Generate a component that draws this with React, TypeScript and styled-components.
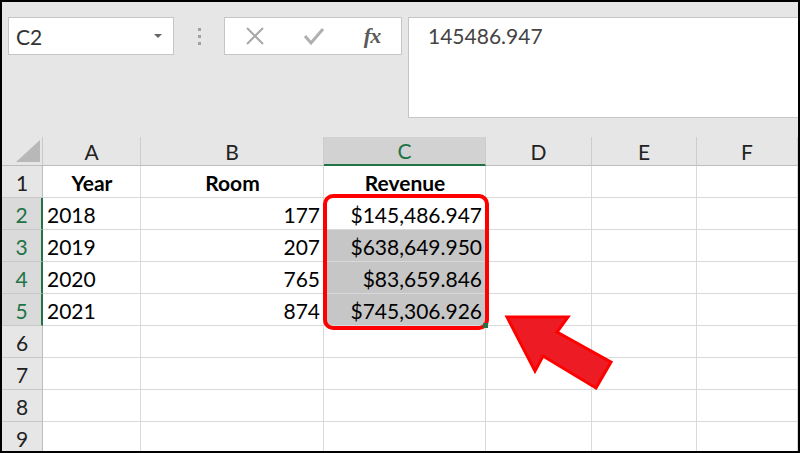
import styled, { createGlobalStyle } from "styled-components";

const GlobalStyle = createGlobalStyle`
  html, body {
    margin: 0;
    padding: 0;
    background: #fff;
  }
`;

const GREEN = "#217346";
const FONT = `"Lato", "Open Sans", "Noto Sans", sans-serif`;

const Frame = styled.div`
  position: relative;
  width: 800px;
  height: 453px;
  box-sizing: border-box;
  border: 2px solid #000;
  background: #e6e6e6;
  overflow: hidden;
  font-family: ${FONT};
  display: flex;
  flex-direction: column;
`;

/* ---------- formula bar ---------- */

const Toolbar = styled.div`
  height: 135px;
  flex-shrink: 0;
  display: flex;
  align-items: flex-start;
  padding: 15px 0 0 6px;
  box-sizing: border-box;
`;

const NameBox = styled.div`
  width: 166px;
  height: 38px;
  box-sizing: border-box;
  background: #fff;
  border: 1px solid #c6c6c6;
  display: flex;
  align-items: center;
  justify-content: space-between;
  padding: 0 11px 0 7px;
  font-size: 21px;
  color: #333;
`;

const DropArrow = styled.span`
  width: 0;
  height: 0;
  border-left: 4px solid transparent;
  border-right: 4px solid transparent;
  border-top: 4px solid #666;
`;

const Grip = styled.div`
  width: 50px;
  height: 38px;
  display: flex;
  flex-direction: column;
  align-items: center;
  justify-content: center;
  gap: 4px;
`;

const GripDot = styled.span`
  width: 3px;
  height: 3px;
  background: #a0a0a0;
`;

const ButtonBox = styled.div`
  width: 178px;
  height: 38px;
  box-sizing: border-box;
  background: #fff;
  border: 1px solid #c6c6c6;
  display: grid;
  grid-template-columns: 60px 58px 58px;
  align-items: center;
  justify-items: center;
`;

const Fx = styled.span`
  font-family: "Liberation Serif", serif;
  font-style: italic;
  font-weight: 700;
  font-size: 22px;
  color: #5a5a5a;
  letter-spacing: -1px;
`;

const FormulaBox = styled.div`
  flex: 1;
  margin-left: 6px;
  height: 101px;
  box-sizing: border-box;
  background: #fff;
  border: 1px solid #c6c6c6;
  border-right: none;
  padding: 5px 0 0 19px;
  font-size: 21px;
  color: #444;
`;

/* ---------- sheet ---------- */

const Sheet = styled.div`
  flex: 1;
  display: grid;
  grid-template-columns: 41px 98px 183px 162px 106px 105px 1fr;
  grid-template-rows: 29px;
  grid-auto-rows: 32px;
  background: #fff;
`;

const Corner = styled.div`
  background: #e6e6e6;
  border-right: 1px solid #c9c9c9;
  border-bottom: 1px solid #bdbdbd;
  display: flex;
  align-items: flex-end;
  justify-content: flex-end;
  padding: 0 2px 3px 0;
`;

const ColHead = styled.div<{ $active?: boolean }>`
  background: ${({ $active }) => ($active ? "#d2d2d2" : "#e6e6e6")};
  color: ${({ $active }) => ($active ? GREEN : "#222")};
  border-right: 1px solid #cdcdcd;
  border-bottom: ${({ $active }) =>
    $active ? `2px solid ${GREEN}` : "1px solid #bdbdbd"};
  display: flex;
  align-items: center;
  justify-content: center;
  font-size: 21px;
`;

const RowHead = styled.div<{ $active?: boolean }>`
  background: ${({ $active }) => ($active ? "#dadada" : "#e6e6e6")};
  color: ${({ $active }) => ($active ? GREEN : "#222")};
  border-right: ${({ $active }) =>
    $active ? `2px solid ${GREEN}` : "1px solid #bdbdbd"};
  border-bottom: 1px solid #c9c9c9;
  display: flex;
  align-items: center;
  justify-content: center;
  font-size: 21px;
  padding-top: 2px;
`;

const Cell = styled.div<{ $align?: "left" | "right" | "center"; $bold?: boolean; $sel?: boolean }>`
  background: ${({ $sel }) => ($sel ? "#c6c6c6" : "#fff")};
  border-right: 1px solid #d9d9d9;
  border-bottom: 1px solid #d9d9d9;
  display: flex;
  align-items: center;
  justify-content: ${({ $align }) =>
    $align === "right" ? "flex-end" : $align === "center" ? "center" : "flex-start"};
  padding: 2px 3px 0 4px;
  font-size: 21px;
  font-weight: ${({ $bold }) => ($bold ? 700 : 400)};
  color: #000;
  white-space: nowrap;
  overflow: hidden;
`;

const Highlight = styled.div`
  position: absolute;
  left: 321px;
  top: 192px;
  width: 166px;
  height: 136px;
  box-sizing: border-box;
  border: 4px solid #f00;
  border-radius: 10px;
`;

const FillHandle = styled.div`
  position: absolute;
  left: 481px;
  top: 321px;
  width: 5px;
  height: 5px;
  background: ${GREEN};
`;

const Arrow = styled.svg`
  position: absolute;
  left: 0;
  top: 0;
  pointer-events: none;
`;

const COLS = ["A", "B", "C", "D", "E", "F"];

type Row = { a?: string; b?: string; c?: string; head?: boolean };

const ROWS: Row[] = [
  { a: "Year", b: "Room", c: "Revenue", head: true },
  { a: "2018", b: "177", c: "$145,486.947" },
  { a: "2019", b: "207", c: "$638,649.950" },
  { a: "2020", b: "765", c: "$83,659.846" },
  { a: "2021", b: "874", c: "$745,306.926" },
  {},
  {},
  {},
  {},
];

export default function App() {
  return (
    <>
      <GlobalStyle />
      <Frame>
        <Toolbar>
          <NameBox>
            C2
            <DropArrow />
          </NameBox>
          <Grip>
            <GripDot />
            <GripDot />
            <GripDot />
          </Grip>
          <ButtonBox>
            <svg width="20" height="20" viewBox="0 0 20 20">
              <path d="M2 2 L18 18 M18 2 L2 18" stroke="#a8a8a8" strokeWidth="2" fill="none" />
            </svg>
            <svg width="22" height="20" viewBox="0 0 22 20">
              <path d="M2 10 L8 17 L20 3" stroke="#b0b0b0" strokeWidth="3" fill="none" />
            </svg>
            <Fx>fx</Fx>
          </ButtonBox>
          <FormulaBox>145486.947</FormulaBox>
        </Toolbar>

        <Sheet>
          <Corner>
            <svg width="24" height="22" viewBox="0 0 24 22">
              <polygon points="0,22 24,22 24,0" fill="#b8b8b8" />
            </svg>
          </Corner>
          {COLS.map((c) => (
            <ColHead key={c} $active={c === "C"}>
              {c}
            </ColHead>
          ))}
          {ROWS.map((r, i) => {
            const n = i + 1;
            const sel = n >= 2 && n <= 5;
            return [
              <RowHead key={`h${n}`} $active={sel}>
                {n}
              </RowHead>,
              <Cell key={`a${n}`} $align={r.head ? "center" : "left"} $bold={r.head}>
                {r.a}
              </Cell>,
              <Cell key={`b${n}`} $align={r.head ? "center" : "right"} $bold={r.head}>
                {r.b}
              </Cell>,
              <Cell key={`c${n}`} $align={r.head ? "center" : "right"} $bold={r.head} $sel={n >= 3 && n <= 5}>
                {r.c}
              </Cell>,
              <Cell key={`d${n}`} />,
              <Cell key={`e${n}`} />,
              <Cell key={`f${n}`} />,
            ];
          })}
        </Sheet>

        <Highlight />
        <FillHandle />
        <Arrow width="800" height="453" viewBox="2 2 800 453">
          <polygon
            points="507,317 568,317 557,332 611,362 596,388 543,356 535,371"
            fill="#ed1c24"
            stroke="#ff0000"
            strokeWidth="3"
            strokeLinejoin="miter"
          />
        </Arrow>
      </Frame>
    </>
  );
}
